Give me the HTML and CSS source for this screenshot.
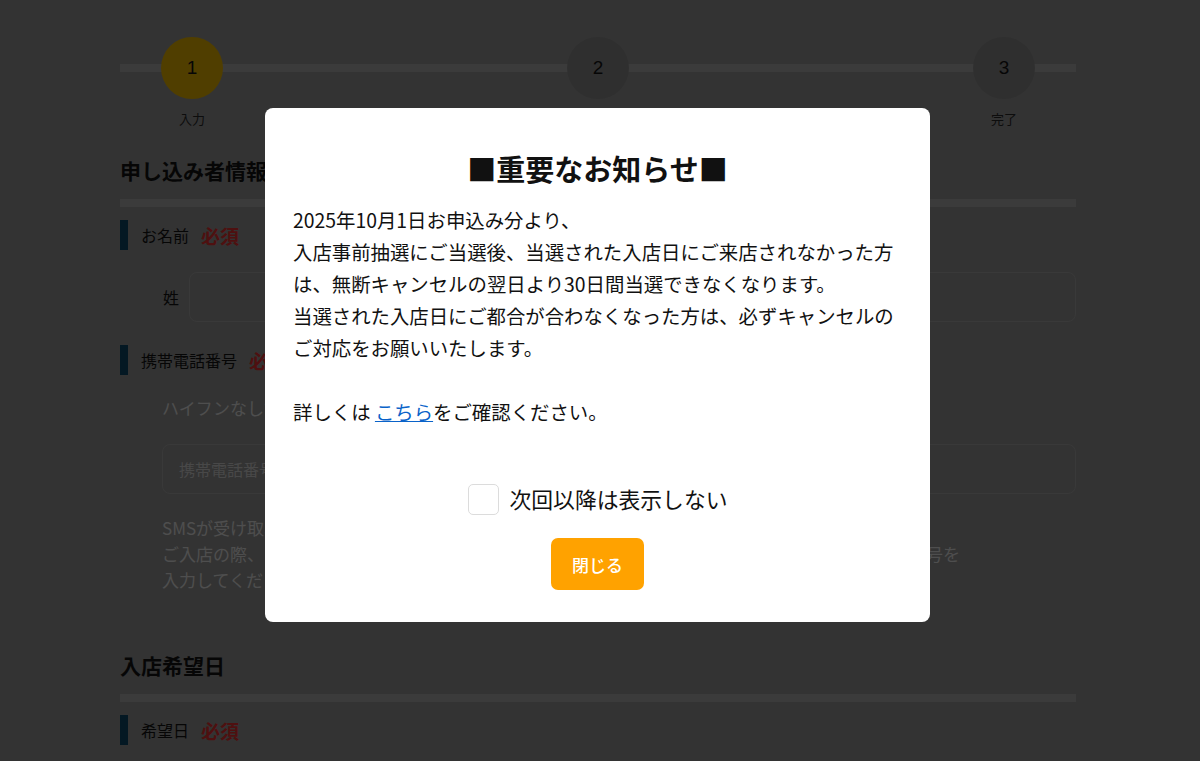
FILE: index.html
```html
<!DOCTYPE html>
<html lang="ja">
<head>
<meta charset="utf-8">
<title>申し込み</title>
<link rel="stylesheet" href="styles.css">
</head>
<body>
<div class="page">
  <div class="stepper">
    <div class="step"><div class="circle active">1</div><div class="step-label">入力</div></div>
    <div class="step"><div class="circle">2</div><div class="step-label">確認</div></div>
    <div class="step"><div class="circle">3</div><div class="step-label">完了</div></div>
  </div>

  <h2 class="section-title">申し込み者情報</h2>
  <div class="section-bar"></div>

  <div class="field-label"><span class="label-text">お名前</span><span class="req">必須</span></div>
  <div class="name-row">
    <span class="name-tag">姓</span><div class="input"></div>
    <span class="name-tag">名</span><div class="input"></div>
  </div>

  <div class="field-label"><span class="label-text">携帯電話番号</span><span class="req">必須</span></div>
  <div class="field-body">
    <p class="help">ハイフンなしで入力してください</p>
    <div class="input wide"><span class="placeholder">携帯電話番号を入力</span></div>
    <p class="note">SMSが受け取れる携帯電話番号をご入力ください。<br>ご入店の際、ご本人様確認のためSMSで届く認証番号が必要となりますので、ご本人様の携帯電話番号を<br>入力してください。</p>
  </div>

  <h2 class="section-title second">入店希望日</h2>
  <div class="section-bar"></div>
  <div class="field-label"><span class="label-text">希望日</span><span class="req">必須</span></div>
</div>

<div class="overlay">
  <div class="modal">
    <h1 class="modal-title">■重要なお知らせ■</h1>
    <p class="modal-text">2025年10月1日お申込み分より、<br>入店事前抽選にご当選後、当選された入店日にご来店されなかった方は、無断キャンセルの翌日より30日間当選できなくなります。<br>当選された入店日にご都合が合わなくなった方は、必ずキャンセルのご対応をお願いいたします。<br><br>詳しくは <a href="#" class="link">こちら</a>をご確認ください。</p>
    <label class="check-row"><input type="checkbox" class="cb"><span>次回以降は表示しない</span></label>
    <button class="close-btn" type="button">閉じる</button>
  </div>
</div>
</body>
</html>
```

FILE: styles.css
```css
* { box-sizing: border-box; }
html, body { margin: 0; padding: 0; }
body {
  background: #808080;
  font-family: "Noto Sans CJK JP", "Noto Sans", sans-serif;
  color: #222;
  height: 761px;
  overflow: hidden;
}
.page {
  width: 956px;
  margin-left: 120px;
  padding-top: 37px;
}
.stepper {
  position: relative;
  display: flex;
  justify-content: space-between;
}
.stepper::before {
  content: "";
  position: absolute;
  left: 0;
  right: 0;
  top: 27px;
  height: 8px;
  background: #949494;
}
.step {
  position: relative;
  width: 144px;
  display: flex;
  flex-direction: column;
  align-items: center;
}
.circle {
  width: 62px;
  height: 62px;
  border-radius: 50%;
  background: #767676;
  display: flex;
  align-items: center;
  justify-content: center;
  font-family: "Liberation Sans", sans-serif;
  font-size: 19px;
  color: #111;
}
.circle.active { background: #c99b00; }
.step-label {
  margin-top: 10px;
  font-size: 13px;
  line-height: 20px;
  color: #222;
}
.section-title {
  margin: 26px 0 0;
  font-size: 21px;
  line-height: 30px;
  font-weight: 700;
  color: #111;
}
.section-title.second { margin-top: 57px; }
.section-bar {
  margin-top: 14px;
  height: 8px;
  background: #949494;
}
.field-label {
  display: flex;
  align-items: center;
  height: 30px;
  margin-top: 13px;
  border-left: 8px solid #0c3e58;
  padding-left: 13px;
}
.label-text { font-size: 16px; color: #111; }
.req {
  margin-left: 12px;
  font-size: 19px;
  font-weight: 700;
  color: #c42a2a;
}
.name-row {
  display: flex;
  align-items: center;
  gap: 10px;
  margin-top: 22px;
  padding-left: 43px;
  margin-bottom: 23px;
}
.name-tag { font-size: 16px; color: #111; }
.input {
  flex: 1;
  height: 50px;
  border: 1px solid #8e8e8e;
  border-radius: 8px;
  display: flex;
  align-items: center;
  padding-left: 16px;
}
.field-body { padding-left: 42px; }
.help {
  margin: 20px 0 0;
  font-size: 17px;
  line-height: 26px;
  color: #c3c3c3;
}
.input.wide { margin-top: 23px; flex: none; }
.placeholder { font-size: 16px; color: #b4b4b4; }
.note {
  margin: 21px 0 0;
  font-size: 17px;
  line-height: 26px;
  color: #c3c3c3;
  white-space: nowrap;
}

.overlay {
  position: fixed;
  inset: 0;
  background: rgba(0, 0, 0, 0.6);
  display: flex;
  justify-content: center;
  align-items: flex-start;
  padding: 108px 5px 0 0;
}
.modal {
  width: 665px;
  background: #fff;
  border-radius: 8px;
  padding: 40px 28px 32px;
  display: flex;
  flex-direction: column;
  align-items: center;
  color: #111;
}
.modal-title {
  margin: 0;
  font-size: 29px;
  line-height: 40px;
  font-weight: 700;
  text-align: center;
}
.modal-text {
  align-self: stretch;
  margin: 16px 0 0;
  font-size: 19.4px;
  line-height: 32px;
}
.link { color: #0a63c9; text-decoration: underline; }
.check-row {
  margin-top: 55px;
  display: flex;
  align-items: center;
  gap: 11px;
  font-size: 21.8px;
  line-height: 32px;
}
.cb {
  appearance: none;
  -webkit-appearance: none;
  margin: 0;
  width: 31px;
  height: 31px;
  border: 1px solid #dcdcdc;
  border-radius: 5px;
  background: #fff;
}
.close-btn {
  margin-top: 23px;
  width: 93px;
  height: 52px;
  border: none;
  border-radius: 7px;
  background: #ffa200;
  color: #fff;
  font-family: "Noto Sans CJK JP", sans-serif;
  font-size: 17px;
  font-weight: 500;
}
```
